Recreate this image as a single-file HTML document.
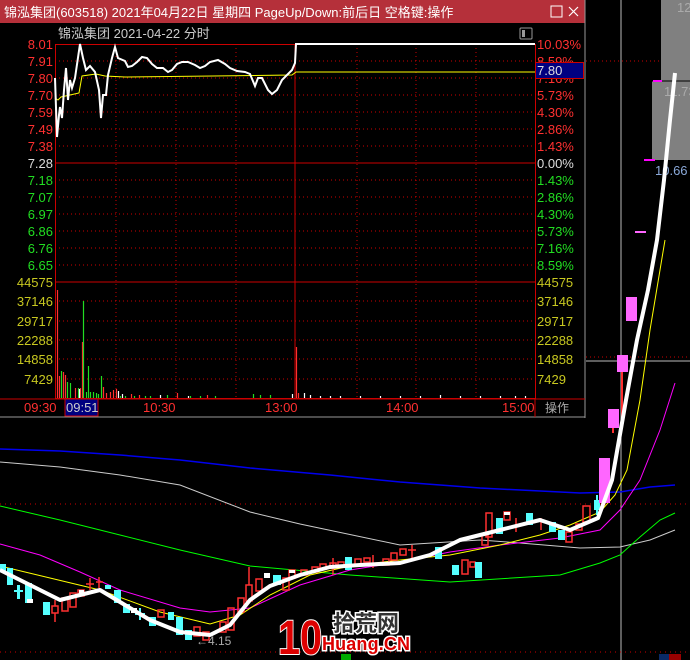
<!DOCTYPE html>
<html><head><meta charset="utf-8"><style>
html,body{margin:0;padding:0;background:#000;width:690px;height:660px;overflow:hidden;font-family:"Liberation Sans","Noto Sans CJK SC",sans-serif}
svg{position:absolute;left:0;top:0}
</style></head><body>
<svg width="690" height="660" viewBox="0 0 690 660" xmlns="http://www.w3.org/2000/svg" font-family="Liberation Sans, Noto Sans CJK SC, sans-serif">
<rect x="661" y="0" width="29" height="81" fill="#808080"/>
<rect x="652" y="81" width="38" height="79" fill="#808080"/>
<line x1="652" y1="81" x2="690" y2="81" stroke="#000"/>
<text x="677" y="12" fill="#aaa" font-size="13">12.3</text>
<text x="664" y="96" fill="#aaa" font-size="13">11.73</text>
<text x="655" y="175" fill="#8aa8d8" font-size="13">10.66</text>
<line x1="653" y1="81" x2="662" y2="81" stroke="#f0f" stroke-width="2"/>
<line x1="644" y1="160" x2="655" y2="160" stroke="#f0f" stroke-width="2"/>
<line x1="586" y1="61" x2="660" y2="61" stroke="#c00" stroke-dasharray="1,3"/>
<line x1="621" y1="0" x2="621" y2="660" stroke="#bbb"/>
<line x1="586" y1="361" x2="690" y2="361" stroke="#bbb"/>
<line x1="586" y1="357" x2="690" y2="357" stroke="#c00" stroke-dasharray="1,3"/>
<line x1="0" y1="504" x2="690" y2="504" stroke="#c00" stroke-dasharray="1,4"/>
<line x1="0" y1="652" x2="690" y2="652" stroke="#c00" stroke-dasharray="1,4"/>
<polyline fill="none" stroke="#0000ee" stroke-width="1.5" points="0,449 60,451 120,455 180,460 250,468 330,475 400,482 480,488 580,493 620,492 650,487 675,485"/>
<polyline fill="none" stroke="#ccc" stroke-width="1" points="0,462 60,467 120,475 180,485 250,512 300,524 400,545 480,540 520,543 580,548 620,547 650,540 675,530"/>
<polyline fill="none" stroke="#0f0" stroke-width="1" points="0,506 60,520 120,535 180,550 250,566 350,575 450,582 560,575 600,563 620,555 640,537 660,520 675,513"/>
<polyline fill="none" stroke="#f0f" stroke-width="1" points="0,544 40,555 80,572 120,590 180,608 210,612 250,608 300,585 350,570 400,562 450,552 500,545 560,538 600,530 620,510 640,480 660,430 675,383"/>
<polyline fill="none" stroke="#ff0" stroke-width="1" points="0,566 50,578 100,590 160,612 210,624 240,615 270,595 310,575 350,566 400,560 450,555 500,545 540,535 570,525 600,512 615,495 627,470 640,400 650,330 660,270 665,240"/>
<g stroke="#ff3030" fill="none" stroke-width="1.5">
<rect x="52" y="606" width="6" height="7"/><line x1="55" y1="600" x2="55" y2="606"/><line x1="55" y1="613" x2="55" y2="622"/>
<rect x="62" y="598" width="6" height="13"/><rect x="70" y="593" width="6" height="14"/><rect x="78" y="590" width="6" height="6"/>
<line x1="86" y1="584" x2="94" y2="584"/><line x1="90" y1="578" x2="90" y2="590"/>
<line x1="96" y1="582" x2="103" y2="582"/><line x1="99" y1="577" x2="99" y2="588"/>
<rect x="158" y="610" width="6" height="7"/><rect x="194" y="627" width="6" height="9"/><rect x="203" y="632" width="6" height="8"/>
<rect x="220" y="622" width="6" height="10"/><rect x="228" y="608" width="6" height="22"/><rect x="238" y="598" width="6" height="14"/><rect x="246" y="585" width="6" height="16"/><line x1="249" y1="567" x2="249" y2="585"/>
<rect x="256" y="579" width="6" height="12"/><rect x="283" y="578" width="6" height="12"/><rect x="289" y="570" width="6" height="8"/>
<rect x="301" y="570" width="6" height="5"/><rect x="312" y="567" width="6" height="5"/><rect x="320" y="564" width="6" height="5"/><rect x="330" y="563" width="6" height="5"/><line x1="333" y1="558" x2="333" y2="575"/>
<rect x="338" y="562" width="6" height="5"/><rect x="355" y="559" width="6" height="6"/><rect x="364" y="558" width="6" height="4"/><line x1="373" y1="555" x2="373" y2="568"/>
<rect x="383" y="559" width="6" height="6"/><rect x="391" y="553" width="6" height="7"/><rect x="400" y="549" width="6" height="6"/><line x1="412" y1="545" x2="412" y2="558"/><line x1="408" y1="550" x2="416" y2="550"/>
<rect x="462" y="560" width="6" height="14"/><rect x="470" y="562" width="5" height="5"/><rect x="482" y="535" width="6" height="10"/>
<rect x="486" y="513" width="6" height="24"/><rect x="504" y="512" width="6" height="8"/><line x1="516" y1="518" x2="516" y2="532"/><line x1="541" y1="518" x2="541" y2="530"/>
<rect x="566" y="532" width="6" height="10"/><rect x="576" y="524" width="6" height="6"/><rect x="583" y="506" width="7" height="16"/>
</g>
<g fill="#55ffff">
<rect x="0" y="564" width="6" height="8"/><rect x="7" y="568" width="6" height="17"/><rect x="17" y="585" width="3" height="14"/><rect x="14" y="590" width="9" height="2"/>
<rect x="25" y="583" width="7" height="20"/><rect x="43" y="602" width="7" height="13"/><rect x="105" y="585" width="6" height="4"/>
<rect x="114" y="590" width="7" height="13"/><rect x="123" y="604" width="7" height="9"/><rect x="139" y="608" width="2" height="12"/><rect x="135" y="613" width="10" height="2"/>
<rect x="149" y="617" width="7" height="9"/><rect x="168" y="612" width="6" height="8"/><rect x="176" y="617" width="7" height="18"/><rect x="185" y="630" width="7" height="10"/>
<rect x="273" y="575" width="8" height="10"/><rect x="345" y="557" width="7" height="13"/><rect x="435" y="547" width="7" height="12"/>
<rect x="452" y="565" width="7" height="10"/><rect x="475" y="562" width="7" height="16"/><rect x="496" y="518" width="7" height="16"/>
<rect x="526" y="513" width="7" height="12"/><rect x="549" y="522" width="7" height="10"/><rect x="558" y="530" width="7" height="10"/>
<rect x="594" y="500" width="6" height="10"/><rect x="596" y="495" width="2" height="20"/>
</g>
<g fill="#fff"><rect x="27" y="599" width="6" height="4"/><rect x="79" y="590" width="5" height="4"/><rect x="131" y="608" width="6" height="5"/><rect x="264" y="573" width="6" height="5"/><rect x="289" y="570" width="6" height="3"/><rect x="504" y="512" width="6" height="3"/></g>
<g fill="#ff66ff">
<rect x="599" y="458" width="11" height="45"/><rect x="608" y="409" width="11" height="19"/><rect x="617" y="355" width="11" height="17"/><rect x="626" y="297" width="11" height="24"/><rect x="635" y="231" width="11" height="2"/>
</g>
<line x1="622" y1="372" x2="622" y2="418" stroke="#ff3030" stroke-width="2"/>
<line x1="613" y1="428" x2="613" y2="433" stroke="#ff3030" stroke-width="2"/>
<polyline fill="none" stroke="#fff" stroke-width="4" stroke-linejoin="round" points="0,570 30,585 60,600 80,595 100,590 125,605 150,620 180,632 210,635 230,625 250,600 270,586 300,575 330,567 360,565 400,563 430,555 460,540 500,530 540,520 570,530 598,518 612,480 626,400 637,340 648,290 657,240 664,180 670,120 675,73"/>
<text x="196" y="645" fill="#aaa" font-size="12">←4.15</text>
<g font-weight="bold">
<text x="278" y="654" fill="#d00" font-size="48" stroke="#fff" stroke-width="2" paint-order="stroke" textLength="44" lengthAdjust="spacingAndGlyphs">10</text>
<text x="333" y="631" fill="#333" font-size="22" stroke="#fff" stroke-width="3" paint-order="stroke" font-family="Noto Sans CJK SC, sans-serif">拾荒网</text>
<text x="322" y="650" fill="#d00" font-size="18" stroke="#fff" stroke-width="3" paint-order="stroke" textLength="88">Huang.CN</text>
</g>
<rect x="341" y="654" width="10" height="6" fill="#0a0"/>
<rect x="659" y="654" width="10" height="6" fill="#0a2a66"/><rect x="669" y="654" width="12" height="6" fill="#900"/>

<rect x="0" y="0" width="585" height="417" fill="#000"/>
<rect x="0" y="0" width="585" height="23" fill="#b5303a"/>
<text x="4" y="17" fill="#fff" font-size="13">锦泓集团(603518) 2021年04月22日 星期四 PageUp/Down:前后日 空格键:操作</text>
<rect x="551" y="6" width="11" height="11" fill="none" stroke="#fff"/>
<path d="M569 7 L578 16 M578 7 L569 16" stroke="#fff" stroke-width="1.2"/>
<line x1="585" y1="0" x2="585" y2="418" stroke="#999"/>
<line x1="0" y1="417" x2="585" y2="417" stroke="#999"/>
<text x="58" y="38" fill="#ccc" font-size="13">锦泓集团  2021-04-22 分时</text>
<rect x="520" y="28" width="12" height="11" fill="none" stroke="#999" rx="1"/><rect x="522" y="30" width="3" height="7" fill="#999"/>
<g stroke="#c00" stroke-dasharray="1,3">
<line x1="55" y1="61" x2="535" y2="61"/><line x1="55" y1="78" x2="535" y2="78"/><line x1="55" y1="95" x2="535" y2="95"/><line x1="55" y1="112" x2="535" y2="112"/><line x1="55" y1="129" x2="535" y2="129"/><line x1="55" y1="146" x2="535" y2="146"/>
<line x1="55" y1="180" x2="535" y2="180"/><line x1="55" y1="197" x2="535" y2="197"/><line x1="55" y1="214" x2="535" y2="214"/><line x1="55" y1="231" x2="535" y2="231"/><line x1="55" y1="248" x2="535" y2="248"/><line x1="55" y1="265" x2="535" y2="265"/>
<line x1="55" y1="301" x2="535" y2="301"/><line x1="55" y1="321" x2="535" y2="321"/><line x1="55" y1="340" x2="535" y2="340"/><line x1="55" y1="359" x2="535" y2="359"/><line x1="55" y1="379" x2="535" y2="379"/>
<line x1="116" y1="44" x2="116" y2="398"/><line x1="176" y1="44" x2="176" y2="398"/><line x1="236" y1="44" x2="236" y2="398"/><line x1="357" y1="44" x2="357" y2="398"/><line x1="416" y1="44" x2="416" y2="398"/><line x1="476" y1="44" x2="476" y2="398"/>
</g>
<g stroke="#c00" stroke-width="1">
<rect x="55.5" y="44.5" width="480" height="354" fill="none"/>
<line x1="55" y1="163" x2="535" y2="163"/><line x1="55" y1="282" x2="535" y2="282"/>
<line x1="295" y1="44" x2="295" y2="398"/>
<line x1="0" y1="399" x2="585" y2="399"/><line x1="535" y1="399" x2="535" y2="417"/>
</g>
<g stroke-width="1.2">
<path d="M57.5 398V290 M59.5 398V376 M63.5 398V372 M65.5 398V375 M75.5 398V388 M80.5 398V388 M82.5 398V342 M103.5 398V387 M106.5 398V393 M110.5 398V392 M113.5 398V390 M116.5 398V389 M131.5 398V394 M139.5 398V395 M177.5 398V393 M207.5 398V395 M296.5 398V347 M298.5 398V393" stroke="#ff3030"/>
<path d="M61.5 398V371 M67.5 398V382 M70.5 398V383 M78.5 398V388 M83.5 398V301 M86.5 398V392 M88.5 398V366 M90.5 398V392 M93.5 398V392 M96.5 398V393 M98.5 398V394 M101.5 398V376 M120.5 398V396 M125.5 398V396 M134.5 398V396 M145.5 398V396 M150.5 398V396 M167.5 398V395 M190.5 398V396 M200.5 398V396 M215.5 398V396 M253.5 398V394 M260.5 398V395 M270.5 398V395" stroke="#22dd22"/>
<path d="M79.5 398V389 M118.5 398V391 M122.5 398V394 M160.5 398V395 M188.5 398V396 M292.5 398V394 M304.5 398V393 M310.5 398V395 M320.5 398V396 M330.5 398V396 M340.5 398V396 M360.5 398V396 M380.5 398V396 M400.5 398V396 M420.5 398V396 M440.5 398V395 M460.5 398V396 M480.5 398V396 M500.5 398V396 M515.5 398V396 M525.5 398V396" stroke="#fff"/>
</g>
<polyline fill="none" stroke="#ff0" stroke-width="1" points="55,98 58,100 61,97 70,95 79,93 82,76 96,74 105,76 125,77 292,75 296,72 535,72"/>
<polyline fill="none" stroke="#fff" stroke-width="2" points="55,78 57,137 59,115 60,107 62,118 64,90 66,68 68,100 70,80 72,88 75,78 80,44 83,58 86,70 90,66 95,72 99,90 101,118 103,95 106,95 108,75 112,58 115,47 118,58 125,61 128,67 132,66 137,62 142,57 147,58 152,64 157,68 163,68 168,72 172,70 177,64 182,62 188,62 195,65 200,68 205,66 210,62 218,60 225,64 230,68 237,71 245,72 250,74 255,86 258,78 262,78 268,90 272,94 277,90 282,80 287,75 292,70 295,63 296,44 535,44"/>
<g font-size="13" text-anchor="end">
<g fill="#ff3030"><text x="53" y="49">8.01</text><text x="53" y="66">7.91</text><text x="53" y="83">7.80</text><text x="53" y="100">7.70</text><text x="53" y="117">7.59</text><text x="53" y="134">7.49</text><text x="53" y="151">7.38</text></g>
<text x="53" y="168" fill="#ddd">7.28</text>
<g fill="#22dd22"><text x="53" y="185">7.18</text><text x="53" y="202">7.07</text><text x="53" y="219">6.97</text><text x="53" y="236">6.86</text><text x="53" y="253">6.76</text><text x="53" y="270">6.65</text></g>
<g fill="#c8c820"><text x="53" y="287">44575</text><text x="53" y="306">37146</text><text x="53" y="326">29717</text><text x="53" y="345">22288</text><text x="53" y="364">14858</text><text x="53" y="384">7429</text></g>
</g>
<g font-size="13">
<g fill="#ff3030"><text x="537" y="49">10.03%</text><text x="537" y="66">8.59%</text><text x="537" y="83">7.16%</text><text x="537" y="100">5.73%</text><text x="537" y="117">4.30%</text><text x="537" y="134">2.86%</text><text x="537" y="151">1.43%</text></g>
<text x="537" y="168" fill="#ddd">0.00%</text>
<g fill="#22dd22"><text x="537" y="185">1.43%</text><text x="537" y="202">2.86%</text><text x="537" y="219">4.30%</text><text x="537" y="236">5.73%</text><text x="537" y="253">7.16%</text><text x="537" y="270">8.59%</text></g>
<g fill="#c8c820"><text x="537" y="287">44575</text><text x="537" y="306">37146</text><text x="537" y="326">29717</text><text x="537" y="345">22288</text><text x="537" y="364">14858</text><text x="537" y="384">7429</text></g>
</g>
<rect x="535.5" y="62.5" width="48" height="16" fill="#000080" stroke="#c00"/>
<text x="537" y="75" fill="#ddd" font-size="13">7.80</text>
<g font-size="13" fill="#ff3030"><text x="24" y="412">09:30</text><text x="143" y="412">10:30</text><text x="265" y="412">13:00</text><text x="386" y="412">14:00</text><text x="502" y="412">15:00</text></g>
<rect x="65" y="399" width="33" height="17" fill="#000080" stroke="#c00"/>
<text x="66" y="412" fill="#ccc" font-size="13">09:51</text>
<text x="545" y="412" fill="#aaa" font-size="12" font-family="Noto Sans CJK SC, sans-serif">操作</text>
</svg>
</body></html>
